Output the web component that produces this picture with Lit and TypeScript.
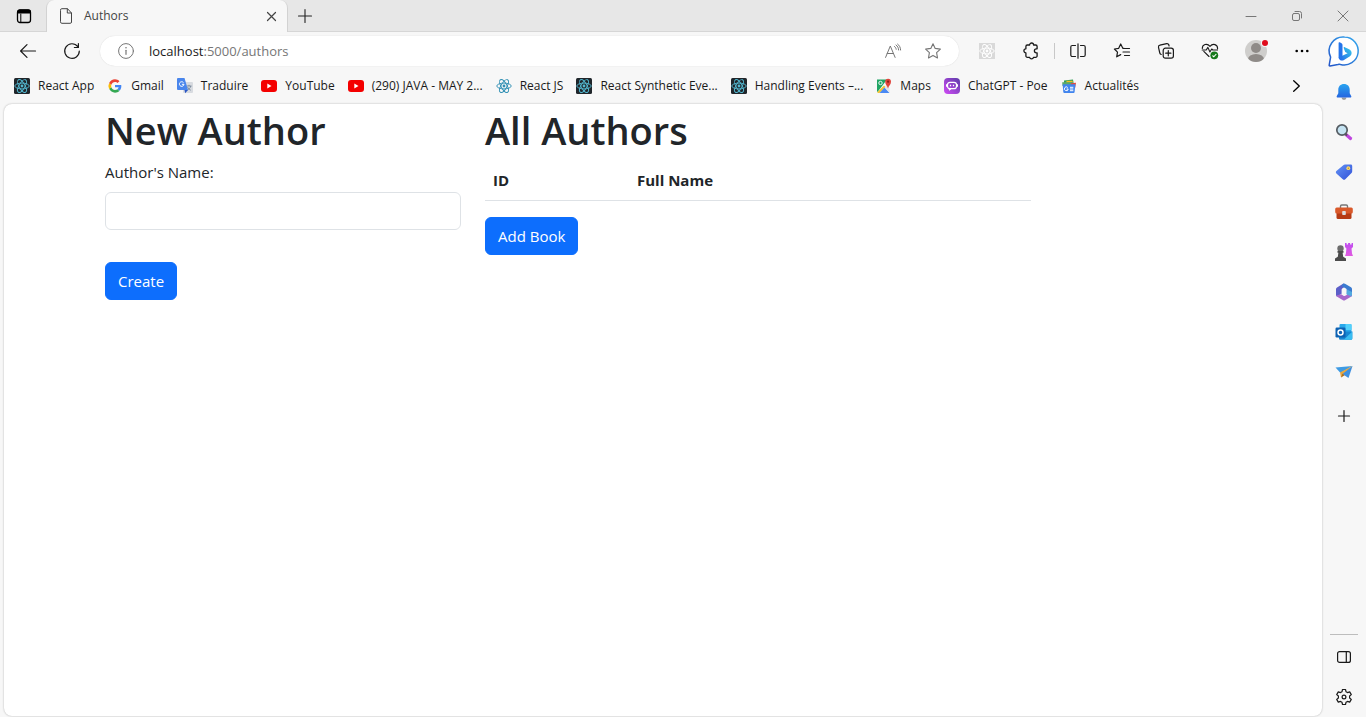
import { LitElement, html, css, svg, TemplateResult } from "lit";
import { customElement } from "lit/decorators.js";

const reactMark = (stroke: string) => svg`
  <g fill="none" stroke=${stroke} stroke-width="0.9">
    <ellipse cx="8" cy="8" rx="7.2" ry="2.9"></ellipse>
    <ellipse cx="8" cy="8" rx="7.2" ry="2.9" transform="rotate(60 8 8)"></ellipse>
    <ellipse cx="8" cy="8" rx="7.2" ry="2.9" transform="rotate(120 8 8)"></ellipse>
  </g>
  <circle cx="8" cy="8" r="1.4" fill=${stroke}></circle>`;

const reactTile = () => html`<svg width="16" height="16" viewBox="0 0 16 16" aria-hidden="true">
  <rect width="16" height="16" rx="1.5" fill="#20262b"></rect>${reactMark("#53b8d0")}</svg>`;

const reactBlue = () => html`<svg width="16" height="16" viewBox="0 0 16 16" aria-hidden="true">${reactMark("#2f8fb3")}</svg>`;

const googleG = () => html`<svg width="16" height="16" viewBox="0 0 48 48" aria-hidden="true">
  <path fill="#4285f4" d="M43 24.5c0-1.400-.1-2.500-.4-3.700H24v7.200h10.900c-.4 2.300-1.700 4.300-3.800 5.700l6 4.700C40.900 35 43 30.200 43 24.500z"/>
  <path fill="#34a853" d="M24 44c5.300 0 9.800-1.800 13.100-4.800l-6-5.500c-1.800 1.200-4.100 2-7.100 2-5.100 0-9.500-3.500-11-8.200l-6.600 5.100C9.700 39.300 16.300 44 24 44z"/>
  <path fill="#fbbc05" d="M13 27.500a12 12 0 0 1 0-7.300l-6.600-5.300a20 20 0 0 0 0 17.900z"/>
  <path fill="#ea4335" d="M24 12c3.700 0 6.200 1.600 7.600 2.900l5.700-5.500C33.800 6.100 29.300 4 24 4 16.300 4 9.700 8.500 6.400 14.900l6.700 5.300C14.500 15.500 18.900 12 24 12z"/></svg>`;

const translate = () => html`<svg width="16" height="16" viewBox="0 0 16 16" aria-hidden="true">
  <rect x="6" y="4" width="10" height="11" rx="1" fill="#d8dbe0"/>
  <path d="M9.500 8h5M12 6.800V8M13.800 8c-.4 2-2 3.500-3.600 4.200M10.600 9c.6 1.500 1.900 2.700 3.200 3.200" stroke="#6d7f93" stroke-width=".8" fill="none"/>
  <path d="M1 0h6.500L11 12H1a1 1 0 0 1-1-1V1a1 1 0 0 1 1-1z" fill="#4a86ec"/>
  <path d="M7.500 12H11l-2.800 3.300z" fill="#2a56c6"/>
  <path d="M6.500 4.600A2.300 2.300 0 1 0 7 6.300H4.900" stroke="#fff" stroke-width="1" fill="none"/></svg>`;

const youtube = () => html`<svg width="16" height="16" viewBox="0 0 16 16" aria-hidden="true">
  <rect y="2" width="16" height="12" rx="3" fill="#f40000"/><path d="M6.300 5.600v4.800L10.500 8z" fill="#fff"/></svg>`;

const maps = () => html`<svg width="16" height="16" viewBox="0 0 16 16" aria-hidden="true">
  <path d="M1 1.500h10L1.500 14A1 1 0 0 1 1 13z" fill="#1fa463"/>
  <path d="M1.200 14.200 8 7.500l1.600 1.400L3.500 15H2z" fill="#f4c430"/>
  <path d="M3.500 15l5-5.400 5 5.400z" fill="#4a89f3"/>
  <path d="M8.600 9.300 11 7l2.500 3v4.500z" fill="#e4e6e8"/>
  <circle cx="4.500" cy="5" r="1.700" fill="none" stroke="#fff" stroke-width=".9"/>
  <path d="M12 10.500C11.500 8 9.200 6.500 9.200 3.700a2.900 2.900 0 0 1 5.800 0c0 2.800-2.500 4.300-3 6.800z" fill="#e0433a"/>
  <circle cx="12.100" cy="3.700" r="1.100" fill="#8c1f19"/></svg>`;

const poe = () => html`<svg width="16" height="16" viewBox="0 0 16 16" aria-hidden="true">
  <defs><linearGradient id="poe" x1="0" y1="1" x2="1" y2="0"><stop offset="0" stop-color="#d14bf5"/><stop offset="1" stop-color="#5b3ba8"/></linearGradient></defs>
  <rect width="16" height="16" rx="4" fill="url(#poe)"/>
  <rect x="3.500" y="4.300" width="9" height="6.400" rx="2.500" fill="none" stroke="#fff" stroke-width="1.200"/>
  <path d="M2.600 6.300v2.400M13.400 6.300v2.400M5 12.300l1.800-1.500" stroke="#fff" stroke-width="1.200"/>
  <path d="M6.500 6.800v1.400M9.500 6.800v1.400" stroke="#fff" stroke-width="1.200"/></svg>`;

const news = () => html`<svg width="16" height="16" viewBox="0 0 16 16" aria-hidden="true">
  <path d="M3 2.500 12 1.500l1 6H3z" fill="#2f9e56"/><path d="M5.500 2.700h6l.5 4h-7z" fill="#f5c026"/>
  <path d="M1.200 4.300 12 4l-1 4H1.500z" fill="#5da869"/><path d="m10 5.300 5-.6-.8 5h-5z" fill="#e2493f"/>
  <path d="M1.600 6.300h12.800l-.8 7.700a1 1 0 0 1-1 .9H3.300a1 1 0 0 1-1-.9z" fill="#4285ee"/>
  <path d="M6.700 9.500A1.900 1.900 0 1 0 7.200 11H5.600M9 9.300h3.300M9 11h3.300M9 12.700h3.300" stroke="#fff" fill="none"/></svg>`;

interface Bookmark { label: string; icon: () => TemplateResult; }

const bookmarks: Bookmark[] = [
  { label: "React App", icon: reactTile },
  { label: "Gmail", icon: googleG },
  { label: "Traduire", icon: translate },
  { label: "YouTube", icon: youtube },
  { label: "(290) JAVA - MAY 2...", icon: youtube },
  { label: "React JS", icon: reactBlue },
  { label: "React Synthetic Eve...", icon: reactTile },
  { label: "Handling Events –...", icon: reactTile },
  { label: "Maps", icon: maps },
  { label: "ChatGPT - Poe", icon: poe },
  { label: "Actualités", icon: news },
];

const reset = css`
  * { box-sizing: border-box; }
  button {
    display: flex; align-items: center; justify-content: center;
    margin: 0; padding: 0; border: 0; background: none; color: inherit; font: inherit; cursor: pointer;
  }
  svg { display: block; flex: none; overflow: visible; }
  .line { fill: none; stroke: currentColor; stroke-linecap: round; stroke-linejoin: round; }
`;

@customElement("title-bar")
export class TitleBar extends LitElement {
  static styles = [reset, css`
    :host { display: block; }
    .bar { display: flex; height: 32px; background: #e7e7e7; color: #222; box-shadow: inset 0 -1px #d6d6d6; }
    .menu { width: 46px; padding-left: 2px; color: #000; }
    .tab { display: flex; align-items: center; width: 242px; padding: 0 8px 0 12px; background: #f7f7f7;
      border-radius: 8px 8px 0 0; border-left: 1px solid #d2d2d2; border-right: 1px solid #d2d2d2; color: #444; }
    .title { flex: 1; margin-left: 11px; font-size: 12px; line-height: 16px; }
    .close { width: 16px; height: 16px; }
    .add { width: 34px; }
    .window { display: flex; margin-left: auto; color: #777; }
    .window button { width: 46px; }
  `];

  render() {
    return html`<header class="bar">
      <button class="menu" aria-label="Tab actions"><svg width="16" height="16" viewBox="0 0 16 16">
        <rect class="line" x="1.500" y="2" width="13" height="12.500" rx="2.500" stroke-width="1.300"/>
        <path d="M1 5.500V4a2.600 2.600 0 0 1 2.600-2.600h8.800A2.600 2.600 0 0 1 15 4v1.500z"/><path class="line" d="M4.800 6v8"/></svg></button>
      <div class="tab">
        <svg width="14" height="16" viewBox="0 0 14 16"><path class="line" d="M1.500 2A1.200 1.200 0 0 1 2.700.7h5.800l4 4.300v9a1.300 1.300 0 0 1-1.300 1.300H2.800A1.300 1.300 0 0 1 1.500 14zM8.300.9V5h4"/></svg>
        <span class="title">Authors</span>
        <button class="close" aria-label="Close tab"><svg width="9" height="9" viewBox="0 0 9 9"><path class="line" stroke-width="1.200" d="m.5.5 8 8m0-8-8 8"/></svg></button>
      </div>
      <button class="add" aria-label="New tab"><svg width="14" height="14" viewBox="0 0 14 14"><path class="line" stroke-width="1.100" d="M7 .5v13M.5 7h13"/></svg></button>
      <div class="window">
        <button aria-label="Minimize"><svg width="10" height="10" viewBox="0 0 10 10"><path class="line" d="M0 5.500h10"/></svg></button>
        <button aria-label="Restore"><svg width="10" height="10" viewBox="0 0 10 10"><rect class="line" x=".5" y="2.500" width="7" height="7" rx="1.500"/><path class="line" d="M3 .5h4.500a2 2 0 0 1 2 2V7"/></svg></button>
        <button aria-label="Close"><svg width="10" height="10" viewBox="0 0 10 10"><path class="line" d="m0 0 10 10M10 0 0 10"/></svg></button>
      </div>
    </header>`;
  }
}

@customElement("nav-toolbar")
export class NavToolbar extends LitElement {
  static styles = [reset, css`
    :host { display: block; }
    .bar { display: flex; align-items: center; height: 38px; padding-left: 6px; color: #1a1a1a; }
    .tool { width: 44px; height: 30px; }
    .address { display: flex; align-items: center; flex: 1; min-width: 0; height: 30px; margin: 0 6px;
      padding: 0 6px 0 8px; background: #fff; border-radius: 15px; box-shadow: 0 0 1px #ccc; color: #767676; }
    .info { width: 36px; height: 30px; }
    .url { flex: 1; min-width: 0; margin-left: 5px; font-size: 13px; line-height: 18px; }
    .host { color: #1a1a1a; }
    .inner { width: 40px; height: 30px; }
    .divider { width: 1px; height: 16px; margin: 0 1px; background: #c8c8c8; }
    .profile { width: 48px; height: 30px; }
  `];

  render() {
    return html`<nav class="bar">
      <button class="tool" aria-label="Back"><svg width="16" height="14" viewBox="0 0 16 14"><path class="line" stroke-width="1.200" d="M15.500 7H.6M7 .6.6 7 7 13.400"/></svg></button>
      <button class="tool" aria-label="Refresh"><svg width="16" height="16" viewBox="0 0 16 16"><path class="line" stroke-width="1.200" d="M15.300 8A7.300 7.300 0 1 1 13.800 3.600M14.400.5v4h-4"/></svg></button>
      <div class="address">
        <button class="info" aria-label="Site information"><svg width="16" height="16" viewBox="0 0 16 16"><circle class="line" cx="8" cy="8" r="7.400"/><path class="line" stroke-width="1.200" d="M8 7.300v4"/><circle cx="8" cy="4.800" r=".8" fill="currentColor"/></svg></button>
        <span class="url"><span class="host">localhost</span>:5000/authors</span>
        <button class="inner" aria-label="Read aloud"><svg width="16" height="14" viewBox="0 0 16 14"><path class="line" d="M.6 13.400 5.300 2l4.800 11.400M2.200 9.500h6.300M9.500 2.500c1 .7 1.500 1.600 1.700 2.800M11 1c1.700 1.200 2.500 2.900 2.600 5M12.600.1c1.900 1.300 2.900 3.400 3 5.900"/></svg></button>
        <button class="inner" aria-label="Add to favorites"><svg width="16" height="16" viewBox="0 0 16 16"><path class="line" stroke-width="1.100" d="m8 .7 2.200 4.700 5.200.7-3.800 3.600.9 5.200L8 12.400l-4.500 2.500.9-5.200L.6 6.100l5.200-.7z"/></svg></button>
      </div>
      <button class="tool" aria-label="React extension"><svg width="16" height="16" viewBox="0 0 16 16"><rect width="16" height="16" fill="#d9d9d9"/>${reactMark("#ffffff")}</svg></button>
      <button class="tool" aria-label="Extensions"><svg width="16" height="16" viewBox="0 0 16 16"><path class="line" stroke-width="1.300" d="M4.300 2h2.300a2 2 0 0 1 4 0h2.100A1.400 1.400 0 0 1 14.100 3.400v2.400h-.7a2 2 0 0 0 0 4h.7v3.100a1.400 1.400 0 0 1-1.400 1.400h-2.200a2 2 0 0 1-3.900 0H4.300A1.400 1.400 0 0 1 2.900 12.900V9.800a2 2 0 0 1 0-4V3.400A1.400 1.400 0 0 1 4.300 2z"/></svg></button>
      <span class="divider"></span>
      <button class="tool" aria-label="Split screen"><svg width="16" height="16" viewBox="0 0 16 16"><path class="line" stroke-width="1.200" d="M5.500 2.500H2.300A1.500 1.500 0 0 0 .8 4v8a1.500 1.500 0 0 0 1.500 1.500h3.200M10.500 2.500h3.200A1.500 1.500 0 0 1 15.200 4v8a1.500 1.500 0 0 1-1.500 1.500h-3.200M8 .8v14.400"/></svg></button>
      <button class="tool" aria-label="Favorites"><svg width="16" height="16" viewBox="0 0 16 16"><path class="line" stroke-width="1.200" d="M10 5.300H8.800L6.700 1 4.700 5.300.4 6l3.100 3.100-.8 4.700 4-2.200M10 5.500h5.500M9 9h6.500M10.500 12.500h5"/></svg></button>
      <button class="tool" aria-label="Collections"><svg width="16" height="16" viewBox="0 0 16 16"><rect class="line" x="5.200" y="5.200" width="10.200" height="10" rx="2.200" stroke-width="1.200"/><path class="line" stroke-width="1.200" d="M10.300 7.600v5.200M7.700 10.200h5.200M3.300 11.500C2.300 11.300 2 10.800 1.800 10L.5 4.300C.3 3.200.8 2.400 1.900 2.200L8.700.7c1-.2 1.900.3 2.100 1.300l.3 1"/></svg></button>
      <button class="tool" aria-label="Browser essentials"><svg width="16" height="16" viewBox="0 0 16 16"><path class="line" stroke-width="1.100" d="M7 13.500 1.800 8.300M.3 5.500C.2 1.500 5-.2 8 3.300c3-3.500 7.800-1.800 7.600 2.400M.2 7h4l1.700-2.600 2 4.600 1.800-3L10.800 7h4.700"/><circle cx="12.300" cy="12.300" r="3.900" fill="#16791b"/><path d="m10.500 12.500 1.300 1.300 2.500-2.800" fill="none" stroke="#fff" stroke-width="1.100"/></svg></button>
      <button class="profile" aria-label="Profile"><svg width="24" height="24" viewBox="0 0 24 24">
        <defs><clipPath id="face"><circle cx="12" cy="12" r="11"/></clipPath></defs>
        <circle cx="12" cy="12" r="11" fill="#cfcecc"/><g clip-path="url(#face)" fill="#8f8b88"><circle cx="12" cy="9" r="5"/><ellipse cx="12" cy="20.500" rx="8" ry="5.500"/></g>
        <circle cx="21" cy="4" r="4" fill="#f7f7f7"/><circle cx="21" cy="4" r="3" fill="#e00b1c"/></svg></button>
      <button class="tool" aria-label="Settings and more"><svg width="14" height="4" viewBox="0 0 14 4"><circle cx="1.700" cy="2" r="1.300"/><circle cx="7" cy="2" r="1.300"/><circle cx="12.300" cy="2" r="1.300"/></svg></button>
    </nav>`;
  }
}

@customElement("bookmark-bar")
export class BookmarkBar extends LitElement {
  static styles = [reset, css`
    :host { display: block; }
    .bar { display: flex; align-items: center; gap: 13px; height: 32px; padding: 0 20px 0 14px; }
    .mark { display: flex; align-items: center; gap: 8px; color: #1a1a1a; text-decoration: none;
      font-size: 12px; line-height: 16px; white-space: nowrap; }
    .more { width: 16px; height: 16px; margin-left: auto; }
  `];

  render() {
    return html`<nav class="bar" aria-label="Favorites bar">
      ${bookmarks.map((b) => html`<a class="mark" href="#">${b.icon()}<span>${b.label}</span></a>`)}
      <button class="more" aria-label="More favorites"><svg width="7" height="12" viewBox="0 0 7 12"><path class="line" stroke-width="1.300" d="m.7.7 5.600 5.300-5.600 5.300"/></svg></button>
    </nav>`;
  }
}

@customElement("side-bar")
export class SideBar extends LitElement {
  static styles = [reset, css`
    :host { display: flex; }
    .rail { display: flex; flex-direction: column; align-items: center; width: 100%; padding: 4px 2px 0 0; color: #1a1a1a; }
    .bing { width: 32px; height: 30px; margin-bottom: 6px; }
    .app { width: 40px; height: 40px; flex: none; }
    .add { margin-top: 4px; }
    .rule { width: 28px; height: 1px; margin: auto 0 2px; background: #bdbdbd; }
  `];

  render() {
    return html`<aside class="rail">
      <button class="bing" aria-label="Bing chat"><svg width="32" height="32" viewBox="0 0 32 32">
        <defs><linearGradient id="ring" x1="0" y1="1" x2="1" y2="0"><stop offset="0" stop-color="#2456c8"/><stop offset="1" stop-color="#35a9ee"/></linearGradient>
        <linearGradient id="bowl" x1="0" y1="1" x2="1" y2="0"><stop offset="0" stop-color="#2563e8"/><stop offset="1" stop-color="#36cdea"/></linearGradient></defs>
        <path d="M16.500 2a14 14 0 1 1-4 27.500c-1-.4-1.600-.3-2.600 0L2 31c-.6.100-.9-.3-.8-.9l1.400-8A14 14 0 0 1 16.500 2z" fill="#fff" stroke="url(#ring)" stroke-width="1.500"/>
        <path d="M15.800 13.200c-.3-.8.200-1.300 1-1l3.800 1.700c2 .9 3 2.300 3 4.100 0 1.500-.7 2.700-2 3.500l-6 3.700c-1.800 1-4.800 0-5-2.700l9-4.300-2.400-1.100z" fill="url(#bowl)"/>
        <path d="M10.600 8c0-.7.500-1 1.100-.7l1.800.9c.7.400 1 .9 1 1.700v12.300c0 2.200-3.900 2.600-3.900 0z" fill="#2474ea"/></svg></button>
      <button class="app" aria-label="Notifications"><svg width="18" height="18" viewBox="0 0 18 18">
        <defs><linearGradient id="bell" x2="0" y2="1"><stop offset="0" stop-color="#29a4f0"/><stop offset="1" stop-color="#2666e0"/></linearGradient></defs>
        <path d="M6.500 14.500h5a2.500 2.500 0 0 1-5 0z" fill="#9a9a9a"/><path d="M9 1c3.500 0 5.700 2.400 5.700 5.700v3.600l1.500 2.700c.4.800.1 1.500-.8 1.500H2.600c-.9 0-1.200-.7-.8-1.500l1.500-2.700V6.700C3.300 3.400 5.500 1 9 1z" fill="url(#bell)"/></svg></button>
      <button class="app" aria-label="Search"><svg width="18" height="18" viewBox="0 0 18 18">
        <path d="m11 11.500 4.500 4" stroke="#bf45df" stroke-width="3.200" stroke-linecap="round"/><path d="m10 10.500 2 2" stroke="#555" stroke-width="2"/>
        <circle cx="7" cy="7" r="5.200" fill="#c5e3f2" stroke="#555c62" stroke-width="1.700"/></svg></button>
      <button class="app" aria-label="Shopping"><svg width="18" height="18" viewBox="0 0 18 18">
        <defs><linearGradient id="tag" x1="0" y1="0" x2="1" y2="1"><stop offset="0" stop-color="#6493f5"/><stop offset="1" stop-color="#3151d8"/></linearGradient></defs>
        <path d="m10 1.500 5.700-.1c1 0 1.500.6 1.500 1.500v5.400c0 .7-.2 1.200-.7 1.700l-6.200 6.300c-.8.700-1.700.7-2.500 0L1.400 10.500c-.7-.7-.7-1.600 0-2.400L8.300 2.200c.5-.5 1-.7 1.700-.7z" fill="url(#tag)"/><circle cx="13.300" cy="5.200" r="1.900" fill="#ffd968"/><circle cx="13.300" cy="5.200" r=".7" fill="#b28d2d"/></svg></button>
      <button class="app" aria-label="Tools"><svg width="18" height="18" viewBox="0 0 18 18">
        <path d="M5.500 5V3.300c0-.8.500-1.300 1.300-1.300h4.400c.8 0 1.300.5 1.300 1.300V5" fill="none" stroke="#777" stroke-width="1.400"/>
        <path d="M1.500 8h15v6.500A1.500 1.500 0 0 1 15 16H3a1.500 1.500 0 0 1-1.500-1.500z" fill="#b63b14"/><rect x=".2" y="4.500" width="17.600" height="6" rx="1.500" fill="#d9592a"/><rect x="7.200" y="8" width="3.600" height="4" rx=".8" fill="#ddd"/></svg></button>
      <button class="app" aria-label="Games"><svg width="20" height="20" viewBox="0 0 20 20">
        <defs><linearGradient id="rook" x2="0" y2="1"><stop offset="0" stop-color="#bf4cf0"/><stop offset="1" stop-color="#e05ae0"/></linearGradient></defs>
        <path d="M11 1h1.600v1.500h1.500V1h2v1.500h1.500V1H19v4l-1.500 1.500.5 5 1 2.500h-8l.9-2.500.5-5L11 5z" fill="url(#rook)"/>
        <circle cx="6.500" cy="6.500" r="3.200" fill="#6c6c6c"/><path d="M3.500 9h6v1.700H8.600l.6 4 2.800 1.800V19H1v-2.500l2.800-1.800.6-4h-.9z" fill="#4b4b4b"/></svg></button>
      <button class="app" aria-label="Microsoft 365"><svg width="18" height="18" viewBox="0 0 18 18">
        <path d="M8.500.6 2 4.400a2 2 0 0 0-1 1.700v5.800c0 .8.400 1.400 1 1.700l4.600-2.800V6.800c0-.7.300-1.300.9-1.600L11.500 3z" fill="#5c5fc8"/>
        <path d="M8 .8a2 2 0 0 1 2 0l6 3.500a2 2 0 0 1 1 1.700v6c0 .7-.3 1.200-.8 1.500l-4.500-2.300V6.800c0-.6-.3-1.100-.8-1.400L6.500 3z" fill="#3a7bd0"/>
        <path d="M1.200 12.500c.2.500.5.900 1 1.200L8 17.200a2 2 0 0 0 2 0l6-3.500a2 2 0 0 0 1-1.700V9.300l-6.800 3.500c-.5.300-1.300.3-1.800 0l-2.200-1.500z" fill="#a767cc"/>
        <path d="M12 6.500 17 9v3l-1 1.600-4.300-2.400z" fill="#52a9df"/></svg></button>
      <button class="app" aria-label="Outlook"><svg width="18" height="18" viewBox="0 0 18 18">
        <rect x="4.500" y="1" width="12" height="12" rx="1" fill="#29a8ea"/><path d="M10.500 1h5a1 1 0 0 1 1 1v5h-6z" fill="#52d1fb"/><path d="M4 8.500h13.300v7a1.200 1.200 0 0 1-1.200 1.200H5.200A1.200 1.200 0 0 1 4 15.500z" fill="#1686d2"/><path d="m17.300 8.500-8.500 8.200h7.300a1.200 1.200 0 0 0 1.200-1.200z" fill="#39bdf1"/>
        <rect x=".5" y="4.500" width="10" height="10" rx="1.200" fill="#0d62b3"/><circle cx="5.500" cy="9.500" r="2.500" fill="none" stroke="#fff" stroke-width="1.500"/></svg></button>
      <button class="app" aria-label="Drop"><svg width="18" height="18" viewBox="0 0 18 18">
        <path d="M.5 4.500 17.500 3 5.500 10z" fill="#3f9be3"/><path d="M17.500 3 5 9.500l1 5z" fill="#e9a63b"/><path d="M17.500 3 7.500 11l6 4z" fill="#3d8fe0"/><path d="m6 14.500 1.500-3.700 2.200 1.500z" fill="#a66b1f"/></svg></button>
      <button class="app add" aria-label="Customize"><svg width="12" height="12" viewBox="0 0 12 12"><path class="line" stroke-width="1.200" d="M6 .5v11M.5 6h11"/></svg></button>
      <span class="rule"></span>
      <button class="app" aria-label="Hide sidebar"><svg width="14" height="12" viewBox="0 0 14 12"><rect class="line" x=".6" y=".6" width="12.800" height="10.800" rx="2" stroke-width="1.200"/><path class="line" stroke-width="1.200" d="M9.300.6v10.800"/></svg></button>
      <button class="app" aria-label="Settings"><svg width="16" height="16" viewBox="0 0 16 16"><path class="line" stroke-width="1.200" d="M6.500.5h3l.5 2.200 1.500.9 2.200-.7 1.600 2.700L13.600 7v2l1.700 1.400-1.600 2.700-2.200-.7-1.500.9-.5 2.200h-3L6 13.300l-1.500-.9-2.200.7L.7 10.400 2.400 9V7L.7 5.600l1.600-2.700 2.200.7L6 2.700z"/><circle class="line" cx="8" cy="8" r="1.900" stroke-width="1.200"/></svg></button>
    </aside>`;
  }
}

@customElement("authors-page")
export class AuthorsPage extends LitElement {
  static styles = [css`
    * { box-sizing: border-box; }
    :host { display: block; }
    .container { display: grid; grid-template-columns: repeat(12, 1fr); max-width: 1140px; margin: 0 auto;
      color: #212529; font-size: 15px; line-height: 24px; }
    .create { grid-column: span 4; padding: 0 12px; }
    .list { grid-column: span 6; padding: 0 12px; }
    h1 { margin: 0 0 4px; font-size: 38px; font-weight: 600; line-height: 52px; white-space: nowrap; }
    .label { display: block; margin-bottom: 8px; }
    .field { display: block; width: 100%; height: 38px; padding: 6px 12px; border: 1px solid #dee2e6;
      border-radius: 6px; background: #fff; color: #212529; font: inherit; }
    .btn { display: block; padding: 6px 12px; border: 1px solid #0d6efd; border-radius: 6px; background: #0d6efd;
      color: #fff; font: inherit; cursor: pointer; }
    .submit { margin-top: 32px; }
    .table { width: 100%; margin-bottom: 16px; border-collapse: collapse; }
    th { padding: 8px; border-bottom: 1px solid #dee2e6; text-align: left; font-weight: 700; }
    .id { width: 144px; }
  `];

  render() {
    return html`<div class="container">
      <section class="create">
        <h1>New Author</h1>
        <form @submit=${(e: Event) => e.preventDefault()}>
          <label class="label" for="name">Author's Name:</label>
          <input class="field" id="name" type="text" name="name">
          <button class="btn submit" type="submit">Create</button>
        </form>
      </section>
      <section class="list">
        <h1>All Authors</h1>
        <table class="table">
          <thead><tr><th class="id" scope="col">ID</th><th scope="col">Full Name</th></tr></thead>
          <tbody></tbody>
        </table>
        <button class="btn" type="button">Add Book</button>
      </section>
    </div>`;
  }
}

@customElement("app-root")
export class AppRoot extends LitElement {
  static styles = css`
    :host { display: flex; flex-direction: column; height: 100vh; background: #f7f7f7; overflow: hidden;
      font-family: "Open Sans", "Noto Sans", sans-serif; }
    .body { display: grid; grid-template-columns: minmax(0, 1fr) 42px; flex: 1; min-height: 0; }
    .main { display: flex; flex-direction: column; min-height: 0; }
    .page { flex: 1; min-height: 0; margin: 2px 2px 1px 4px; overflow: auto; background: #fff; border-radius: 8px;
      box-shadow: 0 0 2px rgba(0, 0, 0, 0.3); }
  `;

  render() {
    return html`<title-bar></title-bar>
      <div class="body">
        <div class="main">
          <nav-toolbar></nav-toolbar>
          <bookmark-bar></bookmark-bar>
          <main class="page"><authors-page></authors-page></main>
        </div>
        <side-bar></side-bar>
      </div>`;
  }
}
